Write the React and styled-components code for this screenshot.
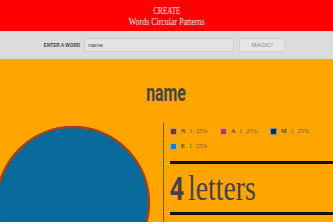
import React from "react";
import styled, { createGlobalStyle } from "styled-components";

const GlobalStyles = createGlobalStyle`
  html, body {
    margin: 0;
    padding: 0;
    background: #ffa500;
    overflow: hidden;
  }
  #root {
    width: 333px;
    height: 222px;
    overflow: hidden;
  }
`;

const Header = styled.div`
  height: 31px;
  background: #ff0000;
  color: #ffe6e6;
  display: flex;
  flex-direction: column;
  align-items: center;
  justify-content: center;
  font-family: "Liberation Serif", serif;
  line-height: 11px;
`;

const Squeeze = styled.span`
  display: inline-block;
  font-size: ${({ size }) => size || 10}px;
  transform: scaleX(${({ sx }) => sx || 0.75});
  white-space: nowrap;
`;

const Toolbar = styled.div`
  height: 28px;
  background: #dcdcdc;
  display: flex;
  align-items: center;
  justify-content: center;
  gap: 4px;
  padding-right: 4px;
  font-family: "Liberation Sans", sans-serif;
`;

const Label = styled.span`
  font-size: 4.7px;
  font-weight: bold;
  color: #444;
`;

const WordInput = styled.div`
  width: 145px;
  height: 12px;
  background: #e3e3e3;
  border: 1px solid #cfcfcf;
  font-size: 6px;
  color: #444;
  display: flex;
  align-items: center;
  padding-left: 3px;
`;

const MagicButton = styled.div`
  width: 44px;
  height: 12px;
  margin-left: 1px;
  background: #e5e5e5;
  border: 1px solid #d2d2d2;
  font-size: 6px;
  color: #8a8a8a;
  display: flex;
  align-items: center;
  justify-content: center;
`;

const Main = styled.div`
  background: #ffa500;
`;

const Title = styled.div`
  height: 64px;
  padding-top: 3px;
  box-sizing: border-box;
  display: flex;
  align-items: center;
  justify-content: center;
  font-family: Roboto, sans-serif;
  font-weight: bold;
  color: #444;
`;

const Columns = styled.div`
  display: grid;
  grid-template-columns: 163px 1fr;
`;

const ChartCol = styled.div`
  height: 100px;
  overflow: hidden;
`;

const InfoCol = styled.div`
  border-left: 1px solid #6a5a3a;
  height: 100px;
  padding-left: 6px;
`;

const Legend = styled.div`
  display: grid;
  grid-template-columns: repeat(3, 50px);
  row-gap: 9px;
  padding-top: 5px;
`;

const LegendItem = styled.div`
  display: flex;
  align-items: center;
  gap: 4px;
  font-family: "Liberation Serif", serif;
  font-size: 6px;
  color: #555;
  height: 6px;
`;

const Swatch = styled.span`
  width: 5px;
  height: 5px;
  background: ${({ color }) => color};
  border: 1px solid rgba(255, 255, 255, 0.45);
`;

const Letter = styled.b`
  color: #444;
`;

const Rule = styled.div`
  height: 3px;
  background: #111;
  margin-top: ${({ top }) => top}px;
`;

const Count = styled.div`
  height: 45px;
  display: flex;
  align-items: center;
  color: #444;
  gap: 4px;
  padding-top: 2px;
  box-sizing: border-box;
`;

const Digit = styled.span`
  font-family: "Open Sans", sans-serif;
  font-weight: bold;
  font-size: 32px;
  display: inline-block;
  transform: scaleX(0.75);
  transform-origin: left center;
  width: 14px;
`;

const Word = styled.span`
  font-family: "Liberation Serif", serif;
  font-size: 36px;
  display: inline-block;
  transform: scaleX(0.77);
  transform-origin: left center;
`;

const legend = [
  { k: "N", color: "#8b3510" },
  { k: "A", color: "#c0392b" },
  { k: "M", color: "#0d2f4f" },
  { k: "E", color: "#1a7fc1" },
];

export default function App() {
  return (
    <>
      <GlobalStyles />
      <Header>
        <Squeeze size={10} sx={0.72}>CREATE</Squeeze>
        <Squeeze size={11} sx={0.72}>Words Circular Patterns</Squeeze>
      </Header>
      <Toolbar>
        <Label>ENTER A WORD</Label>
        <WordInput>name</WordInput>
        <MagicButton>MAGIC!</MagicButton>
      </Toolbar>
      <Main>
        <Title>
          <Squeeze size={24} sx={0.66}>name</Squeeze>
        </Title>
        <Columns>
          <ChartCol>
            <svg width="163" height="100" viewBox="0 0 163 100">
              <circle cx="73" cy="80" r="76" fill="#08699b" stroke="#a3421c" strokeWidth="2.5" />
            </svg>
          </ChartCol>
          <InfoCol>
            <Legend>
              {legend.map((l) => (
                <LegendItem key={l.k}>
                  <Swatch color={l.color} />
                  <Letter>{l.k}</Letter>
                  <span>1</span>
                  <span>25%</span>
                </LegendItem>
              ))}
            </Legend>
            <Rule top={12} />
            <Count>
              <Digit>4</Digit>
              <Word>letters</Word>
            </Count>
            <Rule top={3} />
          </InfoCol>
        </Columns>
      </Main>
    </>
  );
}
